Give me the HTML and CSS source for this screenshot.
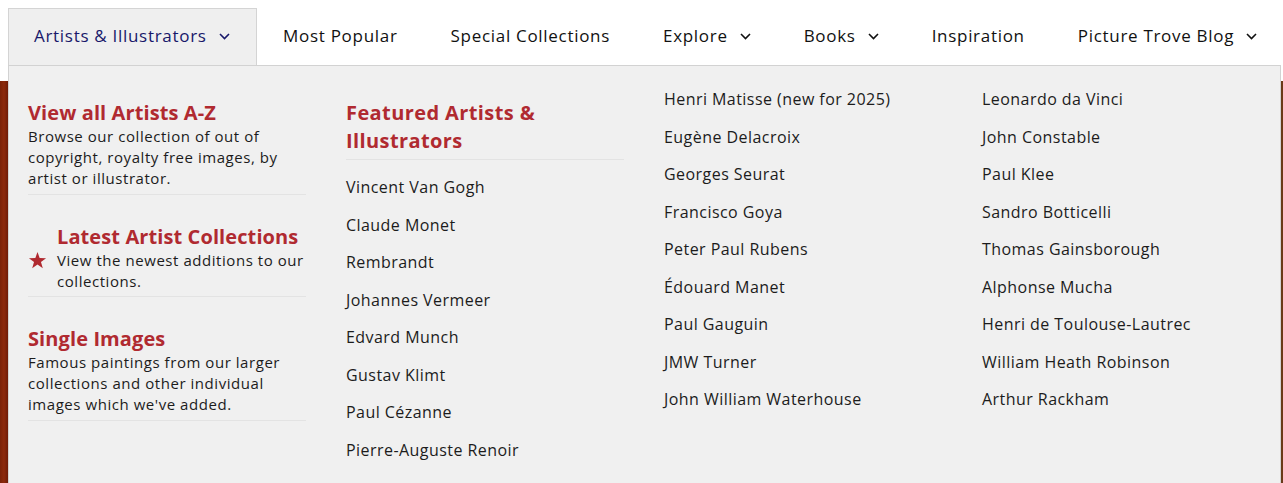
FILE: index.html
```html
<!DOCTYPE html>
<html lang="en">
<head>
<meta charset="utf-8">
<title>Picture Trove – Artists &amp; Illustrators</title>
<link rel="stylesheet" href="styles.css">
</head>
<body>
<header class="site-header">
  <nav class="main-nav">
    <ul class="nav-list">
      <li class="nav-item nav-item--active">
        <a class="nav-link" href="#">Artists &amp; Illustrators<svg class="chev" viewBox="0 0 11 7" width="11" height="7"><path d="M1 1 L5.5 5.5 L10 1"/></svg></a>
      </li>
      <li class="nav-item"><a class="nav-link" href="#">Most Popular</a></li>
      <li class="nav-item"><a class="nav-link" href="#">Special Collections</a></li>
      <li class="nav-item"><a class="nav-link" href="#">Explore<svg class="chev" viewBox="0 0 11 7" width="11" height="7"><path d="M1 1 L5.5 5.5 L10 1"/></svg></a></li>
      <li class="nav-item"><a class="nav-link" href="#">Books<svg class="chev" viewBox="0 0 11 7" width="11" height="7"><path d="M1 1 L5.5 5.5 L10 1"/></svg></a></li>
      <li class="nav-item"><a class="nav-link" href="#">Inspiration</a></li>
      <li class="nav-item"><a class="nav-link" href="#">Picture Trove Blog<svg class="chev" viewBox="0 0 11 7" width="11" height="7"><path d="M1 1 L5.5 5.5 L10 1"/></svg></a></li>
    </ul>
  </nav>
  <div class="mega">
    <div class="mega-col">
      <a class="promo promo--first" href="#">
        <span class="promo-title">View all Artists A-Z</span>
        <span class="promo-desc">Browse our collection of out of copyright, royalty free images, by artist or illustrator.</span>
      </a>
      <a class="promo promo--icon" href="#">
        <svg class="star" viewBox="0 0 24 24" width="19" height="19"><path d="M12 1.2 L14.7 8.8 L22.8 9 L16.4 13.9 L18.7 21.8 L12 17.2 L5.3 21.8 L7.6 13.9 L1.2 9 L9.3 8.8 Z"/></svg>
        <span class="promo-body">
          <span class="promo-title">Latest Artist Collections</span>
          <span class="promo-desc">View the newest additions to our collections.</span>
        </span>
      </a>
      <a class="promo promo--last" href="#">
        <span class="promo-title">Single Images</span>
        <span class="promo-desc">Famous paintings from our larger collections and other individual images which we've added.</span>
      </a>
    </div>
    <div class="mega-col">
      <h3 class="col-title">Featured Artists &amp; Illustrators</h3>
      <ul class="artist-list">
        <li><a href="#">Vincent Van Gogh</a></li>
        <li><a href="#">Claude Monet</a></li>
        <li><a href="#">Rembrandt</a></li>
        <li><a href="#">Johannes Vermeer</a></li>
        <li><a href="#">Edvard Munch</a></li>
        <li><a href="#">Gustav Klimt</a></li>
        <li><a href="#">Paul Cézanne</a></li>
        <li><a href="#">Pierre-Auguste Renoir</a></li>
      </ul>
    </div>
    <div class="mega-col">
      <ul class="artist-list artist-list--top">
        <li><a href="#">Henri Matisse (new for 2025)</a></li>
        <li><a href="#">Eugène Delacroix</a></li>
        <li><a href="#">Georges Seurat</a></li>
        <li><a href="#">Francisco Goya</a></li>
        <li><a href="#">Peter Paul Rubens</a></li>
        <li><a href="#">Édouard Manet</a></li>
        <li><a href="#">Paul Gauguin</a></li>
        <li><a href="#">JMW Turner</a></li>
        <li><a href="#">John William Waterhouse</a></li>
      </ul>
    </div>
    <div class="mega-col">
      <ul class="artist-list artist-list--top">
        <li><a href="#">Leonardo da Vinci</a></li>
        <li><a href="#">John Constable</a></li>
        <li><a href="#">Paul Klee</a></li>
        <li><a href="#">Sandro Botticelli</a></li>
        <li><a href="#">Thomas Gainsborough</a></li>
        <li><a href="#">Alphonse Mucha</a></li>
        <li><a href="#">Henri de Toulouse-Lautrec</a></li>
        <li><a href="#">William Heath Robinson</a></li>
        <li><a href="#">Arthur Rackham</a></li>
      </ul>
    </div>
  </div>
</header>
<div class="spacer"></div>
<section class="hero"></section>
</body>
</html>
```
FILE: styles.css
```css
* { box-sizing: border-box; }
html, body { margin: 0; padding: 0; background: #fff; }
body {
  font-family: "Open Sans", "Liberation Sans", sans-serif;
  color: #1c1c1c;
  overflow: hidden;
  height: 483px;
}
a { color: inherit; text-decoration: none; }

.site-header {
  position: relative;
  padding: 8px 2px 0 8px;
  z-index: 2;
}
.nav-list {
  list-style: none;
  margin: 0;
  padding: 0;
  display: flex;
  height: 57px;
}
.nav-item {
  display: flex;
  flex: none;
}
.nav-link {
  display: flex;
  align-items: center;
  white-space: nowrap;
  padding: 0 25.5px 3px;
  font-size: 17px;
  font-weight: 500;
  letter-spacing: 0.7px;
  color: #111;
  border: 1px solid transparent;
  border-bottom: none;
}
.nav-item--active .nav-link {
  background: #efefef;
  border-color: #d4d4d4;
  color: #18186a;
  padding-left: 25px;
  padding-right: 26px;
}
.chev {
  margin-left: 12px;
  margin-top: 1px;
  fill: none;
  stroke: currentColor;
  stroke-width: 1.6;
}

.mega {
  position: absolute;
  left: 8px;
  right: 2px;
  top: 65px;
  height: 440px;
  background: #f0f0f0;
  border: 1px solid #d2d2d2;
  display: grid;
  grid-template-columns: repeat(4, 278px);
  column-gap: 40px;
  padding: 15px 20px 0 19px;
}

.promo {
  display: block;
  padding: 19px 0 5px;
  border-bottom: 1px solid #e3e3e3;
}
.promo--icon {
  display: flex;
  align-items: center;
  gap: 10px;
  padding-top: 29px;
  padding-bottom: 4px;
}
.promo--last { padding-top: 29px; padding-bottom: 5px; }
.star { fill: #b02a30; flex: none; margin-top: 4px; }
.promo-body { display: block; }
.promo-title {
  display: block;
  color: #b02a30;
  font-size: 20px;
  font-weight: 700;
  line-height: 26px;
  letter-spacing: 0.1px;
}
.promo-desc {
  display: block;
  font-size: 15px;
  line-height: 21px;
  letter-spacing: 0.55px;
  color: #1c1c1c;
}

.col-title {
  margin: 0;
  padding: 18px 0 4px;
  color: #b02a30;
  font-size: 20px;
  font-weight: 700;
  line-height: 28px;
  letter-spacing: 0.4px;
  border-bottom: 1px solid #e3e3e3;
}
.artist-list {
  list-style: none;
  margin: 0;
  padding: 9px 0 0;
}
.artist-list--top { padding-top: 0; }
.artist-list li a {
  display: block;
  font-size: 16px;
  line-height: 21.5px;
  letter-spacing: 0.45px;
  padding: 8px 0;
  color: #1c1c1c;
}

.spacer { height: 16px; }
.hero {
  height: 420px;
  background:
    linear-gradient(90deg, #7a2208 0, #8c2a0c 4px, #6e1c08 8px, transparent 8px, transparent calc(100% - 3px), #6a3a18 calc(100% - 3px)),
    linear-gradient(180deg, #5a3010 0%, #8a2a10 30%, #a0300e 60%, #5a1a08 100%);
}
```
